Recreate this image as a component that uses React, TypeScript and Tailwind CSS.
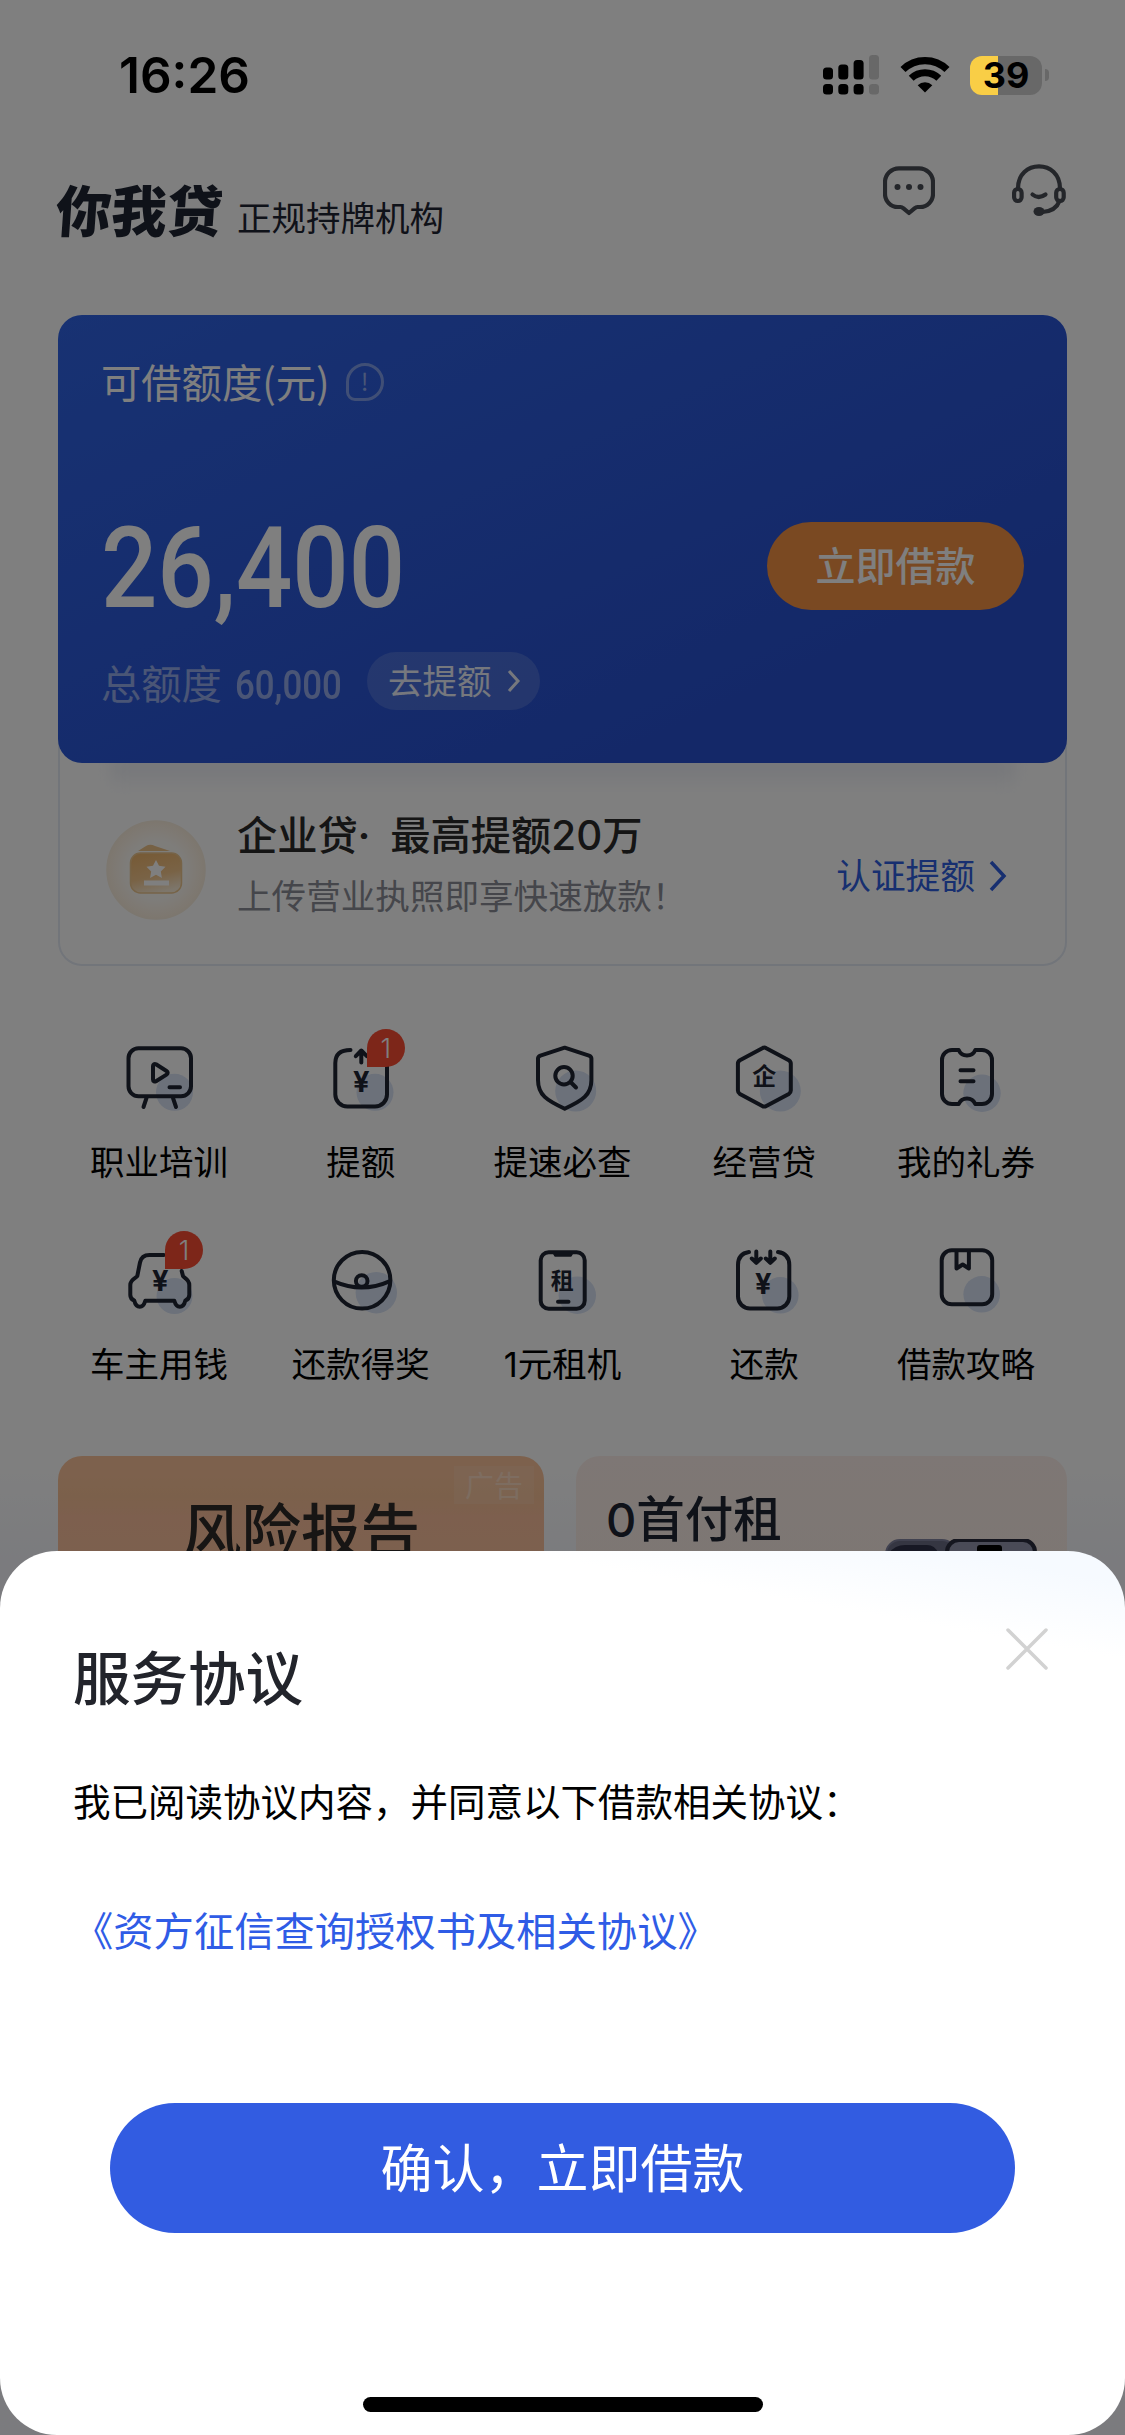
import { FC, ReactNode } from "react";

type TService = {
  label: ReactNode;
  badge?: number;
  spot: { cx: number; cy: number; r: number };
  icon: ReactNode;
};

const glyph = {
  fill: "#1f2533",
  stroke: "none",
  textAnchor: "middle" as const,
  fontWeight: 700,
};

const Yen: FC<{ x: number; y: number }> = ({ x, y }) => (
  <text {...glyph} fontFamily="Inter" x={x} y={y} fontSize="29">¥</text>
);

const services: TService[] = [
  {
    label: "职业培训",
    spot: { cx: 55.5, cy: 54.3, r: 18.5 },
    icon: (
      <>
        <rect x="9.5" y="10.3" width="62.5" height="48" rx="10" />
        <path d="M34 28v13.500c0 1.700 1.500 2.500 3 1.700l10.500-6.600c1.600-1 1.600-2.600 0-3.600L37 26.300c-1.500-.8-3 0-3 1.700z" />
        <path d="M50.500 49.300H61M27.500 60l-3 9M54 60l3 9" />
      </>
    ),
  },
  {
    label: "提额",
    badge: 1,
    spot: { cx: 54, cy: 54.3, r: 18.5 },
    icon: (
      <>
        <path d="M29.500 12C20 12 14.300 16 14.300 25v31.500a12 12 0 0 0 12 12H54a12 12 0 0 0 12-12V18" />
        <path d="M40.300 24.500V13M34.800 18.200l5.500-5.700 5.500 5.700" />
        <Yen x={40.3} y={53.5} />
      </>
    ),
  },
  {
    label: "提速必查",
    spot: { cx: 53.7, cy: 53, r: 20.5 },
    icon: (
      <>
        <path d="M42.700 9.700 67 17.600q2.400.9 2.400 3V42c0 15-9 20.500-26.700 28.700C25 62.500 16 57 16 42V20.600q0-2.100 2.400-3z" />
        <circle cx="42" cy="37.700" r="8.700" />
        <path d="m48.500 44 5.500 5.500" />
      </>
    ),
  },
  {
    label: "经营贷",
    spot: { cx: 56.3, cy: 53, r: 20.5 },
    icon: (
      <>
        <path d="M38.300 10.200q2-1.200 4 0l22.500 12q2 1.200 2 3.400v27q0 2.200-2 3.400l-22.500 12q-2 1.200-4 0l-22.400-12q-2-1.200-2-3.400v-27q0-2.200 2-3.400z" />
        <text {...glyph} x="40.300" y="47" fontSize="24">企</text>
      </>
    ),
  },
  {
    label: "我的礼券",
    spot: { cx: 56, cy: 55.3, r: 18.7 },
    icon: (
      <>
        <path d="M26 12h6.700c1.500 3.500 4.500 5.500 8.300 5.500s6.800-2 8.300-5.500H56a10 10 0 0 1 10 10v34a10 10 0 0 1-10 10h-6.700c-1.500-3.500-4.500-5.500-8.300-5.500s-6.800 2-8.300 5.500H26a10 10 0 0 1-10-10V22a10 10 0 0 1 10-10z" />
        <path d="M34.500 32.300h13M34.500 43.300h13" />
      </>
    ),
  },
  {
    label: "车主用钱",
    badge: 1,
    spot: { cx: 55.5, cy: 56, r: 18 },
    icon: (
      <>
        <path d="M44.800 15H30.500c-6 0-8.500 2.500-9.500 7.500l-2.700 13.500c-.3 1.500-7 3-7 9v10c0 3 1.200 4.500 4 5.700 1 4 2.500 6 5.500 6s4.500-2.500 5.500-6h29c1 3.500 2.500 6 5.500 6s4.500-2 5.500-6c2.800-1.200 4-2.700 4-5.700V45c0-6-6-7.500-6.300-9L62.700 31" />
        <Yen x={41.2} y={51} />
      </>
    ),
  },
  {
    label: "还款得奖",
    spot: { cx: 55.3, cy: 52.7, r: 20.7 },
    icon: (
      <>
        <circle cx="41.100" cy="40.300" r="28.300" />
        <circle cx="40.700" cy="41" r="5.800" />
        <path d="M13.500 41.700q27.500 12 55.500-.5" />
      </>
    ),
  },
  {
    label: <><span className="font-[Inter]">1</span>元租机</>,
    spot: { cx: 55.3, cy: 55.3, r: 18.7 },
    icon: (
      <>
        <rect x="18.700" y="12.300" width="44" height="56.500" rx="8" />
        <path d="M31 12.500h20l-2 3.500H33z" fill="#1f2533" strokeWidth="1.500" />
        <path d="M36 61.700h10.500" />
        <text {...glyph} x="40.300" y="48.500" fontSize="23">租</text>
      </>
    ),
  },
  {
    label: "还款",
    spot: { cx: 56.3, cy: 55.3, r: 18.3 },
    icon: (
      <>
        <path d="M25 12C18 13 14 17 14 25v31.500a12 12 0 0 0 12 12h27.300a12 12 0 0 0 12-12V25c0-8-4-12-11.300-13" />
        <path d="M32.300 11.500v11M27.800 18.500l4.500 4.300 4.500-4.300M46.300 11.500v11M41.800 18.500l4.500 4.300 4.500-4.300" />
        <Yen x={39.3} y={54} />
      </>
    ),
  },
  {
    label: "借款攻略",
    spot: { cx: 55.7, cy: 54.3, r: 18.3 },
    icon: (
      <>
        <rect x="15.700" y="10.300" width="50.500" height="54" rx="10" />
        <path d="M30.500 11v17.500l6.200-4 6.200 4V11" />
      </>
    ),
  },
];

const StatusBar: FC = () => (
  <div className="relative z-20 flex h-[150px] items-start justify-between pt-[44px] pl-[119px] pr-[76px] text-black">
    <span className="font-[Inter] text-[49.500px] leading-[62px] font-semibold">16:26</span>
    <div className="flex items-center pt-[11px]">
      <svg width="56" height="40" viewBox="0 0 56 40">
        <rect x="0" y="12.500" width="10" height="12" rx="3.500" />
        <rect x="15.300" y="9.500" width="10" height="15" rx="3.500" />
        <rect x="30.600" y="5" width="10" height="19.500" rx="3.500" />
        <rect x="46" y="0" width="10" height="24.500" rx="3.500" fill="#686868" />
        <rect x="0" y="29" width="10" height="10.500" rx="3.500" />
        <rect x="15.300" y="29" width="10" height="10.500" rx="3.500" />
        <rect x="30.600" y="29" width="10" height="10.500" rx="3.500" />
        <rect x="46" y="29" width="10" height="10.500" rx="3.500" fill="#686868" />
      </svg>
      <svg className="ml-[21px]" width="50" height="40" viewBox="0 0 50 40" fill="none" stroke="#000">
        <path d="M3 14.500a31.500 31.500 0 0 1 44 0" strokeWidth="7.200" />
        <path d="M11.200 23.200a20 20 0 0 1 27.600 0" strokeWidth="7" />
        <path d="M25 37.500l-7.300-7.300a10.500 10.500 0 0 1 14.600 0z" fill="#000" stroke="none" />
      </svg>
      <div className="ml-[20px] flex h-[39px] w-[72px] items-center justify-center rounded-[12px] bg-[linear-gradient(90deg,#f9ce46_39%,#686868_39%)] font-[Inter] text-[36px] leading-none font-bold">
        39
      </div>
      <div className="ml-[3px] h-[12px] w-[4px] rounded-r-full bg-[#686868]" />
    </div>
  </div>
);

const Header: FC = () => (
  <header className="flex h-[165px] justify-between pl-[57px] pr-[59px]">
    <div className="flex items-start">
      <h1 className="w-[166px] -skew-x-4 pt-[26px] text-[55.500px] leading-[64px] font-black whitespace-nowrap text-[#1f2533]">你我贷</h1>
      <span className="ml-[14px] pt-[42px] text-[34.500px] leading-[48px] text-[#1f2533]">正规持牌机构</span>
    </div>
    <div className="flex gap-[77px] pt-[14px]">
      <svg width="52" height="52" viewBox="0 0 52 52" fill="none" stroke="#484c55" strokeWidth="4.200" strokeLinejoin="round">
        <path d="M16 4.300h20A14 14 0 0 1 50 18v12a13 13 0 0 1-13 13h-2.500q-1.500 0-2.700 1.200L26 49l-5.800-4.800Q19 43 17.500 43H15A13 13 0 0 1 2 30V18A14 14 0 0 1 16 4.300z" />
        <g fill="#484c55" stroke="none">
          <circle cx="14.500" cy="23" r="3" />
          <circle cx="26" cy="23" r="3" />
          <circle cx="37.500" cy="23" r="3" />
        </g>
      </svg>
      <svg width="54" height="54" viewBox="0 0 54 54" fill="none" stroke="#484c55" strokeWidth="4.200" strokeLinecap="round">
        <path d="M6 24.500C6 10 16 2.300 27 2.300S48 10 48 24.500" />
        <rect x="2.100" y="25" width="7.500" height="12" rx="3.700" />
        <rect x="44.200" y="25" width="7.500" height="12" rx="3.700" />
        <path d="M20.500 30.500q6 5 13 0M47.500 37c-3 8-9 10.500-17 11" />
        <ellipse cx="27" cy="47.500" rx="5.500" ry="4.500" fill="#484c55" stroke="none" />
      </svg>
    </div>
  </header>
);

const QuotaCard: FC = () => (
  <section className="relative z-[1] h-[448px] rounded-[24px] bg-[linear-gradient(155deg,#3064e6_0%,#2850d0_80%)] pt-[44px] pr-[43px] pl-[43px]">
    <div className="flex h-[46px] items-center text-white">
      <span className="pb-[3px] text-[40.300px] leading-[46px] whitespace-nowrap">可借额度(元)</span>
      <span className="ml-[16px] flex size-[38px] items-center justify-center rounded-[19px] rounded-bl-[9px] border-[3px] border-white/40 pb-[2px] text-[24px] leading-none text-white/50">
        !
      </span>
    </div>
    <div className="mt-[101px] flex h-[120px] items-center justify-between">
      <span className="w-[340px] origin-left scale-x-[0.870] pt-[3px] font-[Roboto] text-[114px] leading-[120px] font-medium text-white">26,400</span>
      <button className="h-[88px] w-[257px] rounded-full bg-[#f49244] pb-[4px] text-[40px] leading-[84px] font-medium text-white">
        立即借款
      </button>
    </div>
    <div className="mt-[26px] flex h-[58px] items-center">
      <span className="pt-px text-[40.300px] leading-[50px] text-white/50">总额度</span>
      <span className="ml-[13px] w-[104px] origin-left scale-x-[0.850] pt-[7px] font-[Roboto] text-[41px] leading-[50px] font-medium text-white/50">60,000</span>
      <span className="ml-[28px] flex h-[58px] w-[173px] items-center rounded-full bg-white/15 pl-[21px] text-[34.500px] leading-[48px] text-white/90">
        <span className="pb-[4px]">去提额</span>
        <svg className="ml-[16px]" width="14" height="24" viewBox="0 0 14 24" fill="none" stroke="currentColor" strokeWidth="3">
          <path d="M2 2l9 10-9 10" />
        </svg>
      </span>
    </div>
  </section>
);

const EnterpriseCard: FC = () => (
  <section className="relative -mt-[24px] flex h-[227px] rounded-b-[24px] border-2 border-t-0 border-[#e4eaf5] pl-[46px]">
    {/* soft shadow cast by the quota card */}
    <div className="absolute top-[20px] left-[50px] h-[32px] w-[906px] bg-[linear-gradient(180deg,#e6e9f2,#ffffff)] blur-[8px]" />
    <svg className="relative mt-[81px]" width="100" height="100" viewBox="0 0 100 100">
      <defs>
        <radialGradient id="halo">
          <stop offset="0.600" stopColor="#fdfaf5" />
          <stop offset="1" stopColor="#fbeedd" />
        </radialGradient>
        <linearGradient id="gold" x1="0.200" y1="0" x2="0.500" y2="1">
          <stop offset="0" stopColor="#eeb56c" />
          <stop offset="0.600" stopColor="#f3c68c" />
          <stop offset="1" stopColor="#faecd6" />
        </linearGradient>
      </defs>
      <circle cx="50" cy="50" r="49" fill="url(#halo)" stroke="#f9eedf" strokeWidth="1.500" />
      <path d="M32 31l8-5q4-2.500 9 0L64 31z" fill="#edc288" />
      <rect x="24.500" y="33" width="51" height="40" rx="10" fill="url(#gold)" stroke="#ecc68e" strokeWidth="1.500" />
      <path d="M50 40l3 5.800 6.500 1-4.700 4.600 1.100 6.500-5.900-3.100-5.900 3.100 1.100-6.500-4.700-4.600 6.500-1z" fill="#fff" />
      <rect x="38" y="60.500" width="25" height="5" fill="#fff" />
    </svg>
    <div className="relative ml-[31px] flex flex-col whitespace-nowrap">
      <span className="mt-[68px] text-[40.300px] leading-[52px] font-medium text-[#2b2b2b]">
        企业贷<span className="mr-[11px] font-[Roboto] font-bold">·</span> 最高提额<span className="font-[Inter]">20</span>万
      </span>
      <span className="mt-[7px] text-[34.600px] leading-[48px] text-[#8b8d96]">上传营业执照即享快速放款！</span>
    </div>
    <div className="relative mt-[109px] mr-[57px] ml-auto flex h-[52px] items-center text-[34.700px] leading-[48px] text-[#2f5fe0]">
      认证提额
      <svg className="mt-[4px] ml-[13px]" width="20" height="32" viewBox="0 0 20 32" fill="none" stroke="currentColor" strokeWidth="3.500">
        <path d="M3 2l13 14L3 30" />
      </svg>
    </div>
  </section>
);

const ServiceGrid: FC = () => (
  <section className="mt-[72px] grid grid-cols-5 gap-y-[52px]">
    {services.map(({ label, badge, spot, icon }, i) => (
      <div key={i} className="relative flex h-[150px] flex-col items-center">
        <svg
          width="80"
          height="80"
          viewBox="0 0 80 80"
          fill="none"
          stroke="#1f2533"
          strokeWidth="4"
          strokeLinecap="round"
          strokeLinejoin="round"
        >
          <circle {...spot} fill="#d8e2f5" stroke="none" />
          {icon}
        </svg>
        {badge && (
          <span className="absolute -top-[9px] left-[107px] flex size-[38px] items-center justify-center rounded-full rounded-bl-none bg-[#fa4c32] font-[Inter] text-[27px] leading-none font-light text-white">
            {badge}
          </span>
        )}
        <span className="mt-[18px] text-[34.500px] leading-[48px] whitespace-nowrap text-black">{label}</span>
      </div>
    ))}
  </section>
);

const Promos: FC = () => (
  <section className="mt-[66px] flex justify-between">
    <div className="relative h-[200px] w-[486px] rounded-[24px] bg-[linear-gradient(180deg,#fac39a,#fac39a_10%,#f7c196_20%,#fabf9c_30%,#f7c59c)] pt-[35px] text-center">
      <span className="absolute top-[10px] right-[10px] h-[38px] w-[80px] bg-white/10 text-[29px] leading-[36px] text-white/35">广告</span>
      <span className="text-[59.500px] leading-[72px] font-medium text-[#2e2b28]">风险报告</span>
    </div>
    <div className="relative h-[200px] w-[491px] rounded-[24px] bg-[linear-gradient(180deg,#fcefea,#faece4)] pt-[27px] pl-[30px]">
      <span className="text-[48.500px] leading-[66px] font-medium text-[#1f2533]"><span className="font-[Inter] text-[47px]">0</span>首付租</span>
      {/* top edge of the phones that the banner advertises */}
      <svg className="absolute top-[83px] left-[309px]" width="152" height="60" viewBox="0 0 152 60">
        <rect x="1" y="1" width="70" height="70" rx="14" fill="#6a6c84" stroke="#8284a0" strokeWidth="2" />
        <path d="M4 14Q10 6 20 6h22q8 0 11 8z" fill="#2e3048" />
        <rect x="62" y="1" width="88" height="70" rx="12" fill="#9496ae" stroke="#2a2c3e" strokeWidth="4" />
        <rect x="92" y="6" width="25" height="12" rx="3" fill="#000" />
      </svg>
    </div>
  </section>
);

const AgreementSheet: FC = () => (
  <section className="absolute inset-x-0 bottom-0 z-20 flex h-[884px] flex-col rounded-[57px] bg-white bg-[linear-gradient(190deg,#f6faff_3%,#ffffff_10%)] px-[73px]">
    <div className="flex items-start justify-between">
      <h2 className="mt-[86px] text-[57.500px] leading-[76px] font-medium text-[#22242b]">服务协议</h2>
      <svg className="mt-[77px] mr-[4px]" width="42" height="42" viewBox="0 0 42 42" stroke="#d2d2d2" strokeWidth="3.500" strokeLinecap="round">
        <path d="M2 2l38 38M40 2L2 40" />
      </svg>
    </div>
    <p className="mt-[61px] text-[37.500px] leading-[52px] whitespace-nowrap text-black">我已阅读协议内容，并同意以下借款相关协议：</p>
    <a className="mt-[75px] text-[40.300px] leading-[56px] whitespace-nowrap text-[#2f5ce6]">《资方征信查询授权书及相关协议》</a>
    <button className="mt-[146px] h-[130px] w-[905px] self-center rounded-full bg-[#325ce1] pb-[5px] text-[52px] leading-[125px] text-white">
      确认，立即借款
    </button>
    <div className="mt-auto mb-[23px] h-[15px] w-[400px] self-center rounded-full bg-black" />
  </section>
);

export default function App() {
  return (
    <main className="relative h-[2435px] w-[1125px] overflow-hidden bg-[linear-gradient(180deg,#ffffff_60%,#f6f7fc_64%)] font-['Noto_Sans_CJK_SC',sans-serif]">
      <StatusBar />
      <Header />
      <div className="px-[58px]">
        <QuotaCard />
        <EnterpriseCard />
        <ServiceGrid />
        <Promos />
      </div>
      <div className="absolute inset-0 z-10 bg-black/50" />
      <AgreementSheet />
    </main>
  );
}
